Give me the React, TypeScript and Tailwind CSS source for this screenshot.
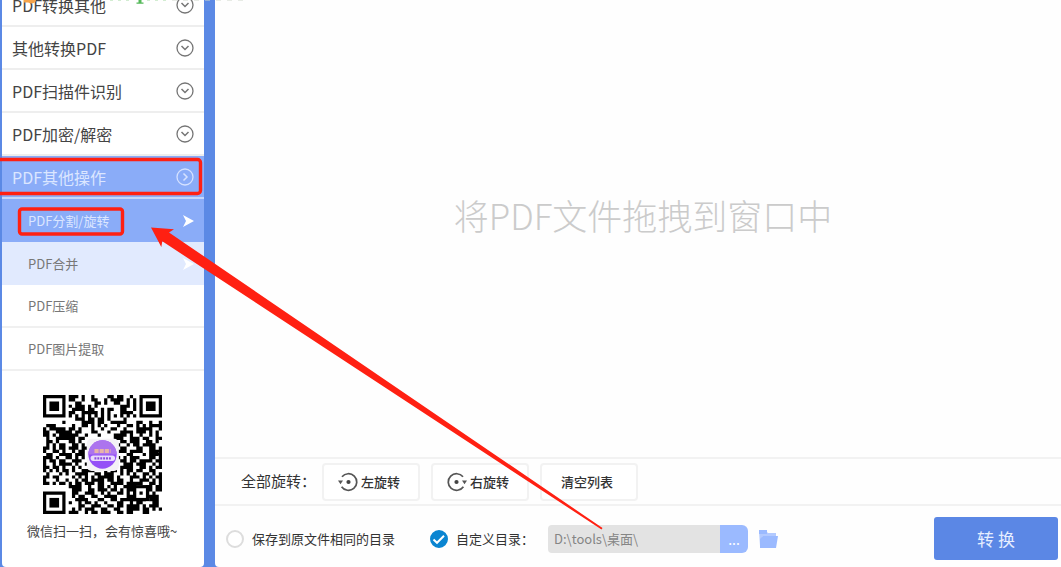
import { useState } from 'react';
import type { ReactNode } from 'react';

const GROUPS = ['PDF转换其他', '其他转换PDF', 'PDF扫描件识别', 'PDF加密/解密', 'PDF其他操作'];
const TOOLS = ['PDF分割/旋转', 'PDF合并', 'PDF压缩', 'PDF图片提取'];

// One string per module row. Bottom-left finder is drawn separately.
const QR_ROWS = [
  '#######.###.#..#....##.##..#..#######',
  '#.....#.##..#..##..#.####.#.#.#.....#',
  '#.###.#...##....##.#..##..#.#.#.###.#',
  '#.###.#.#.###.#.#.......###.#.#.###.#',
  '#.###.#..####.##..#.##..##..#.#.###.#',
  '#.....#.##..#####.#.#...####..#.....#',
  '#######.#.#.#.#.#.#.#.#.#.#.#.#######',
  '..........###.##.##.#....#...........',
  '......#.....####.##..#####...##..#..#',
  '.###.....#..##.#.#.#...#..##.#.#.####',
  '#.#####.##.#...#..#..##..#...#####..#',
  '##..#####.##...##...#...####.###.#.#.',
  '##.#.######..#...#....####.#..#..#.#.',
  '.#..######.##.........###..###.##..##',
  '.##.#...##.#..........#.##.###..##.#.',
  '.#.#.##..##.#.........##..#.##.####..',
  '##.#.##.###.###.......#.##...##..##.#',
  '#..##.#..#.##..........###.####..####',
  '.##..####.###.........#...##...#.####',
  '###.#..##.#.#.........##.#.###...##.#',
  '#.##.##..###..........#.##.##.####.##',
  '#..#.####.#..#.......#...###.###..#.#',
  '##.##.#..#.#..#......##.####..##.#.##',
  '#.#.#.##.#..####...#.##.#.##.##..##..',
  '.#...#.#..####..##.###..#.#.#..##.#.#',
  '##.##....#.#.#.#.#####.#...###.#.#.##',
  '#...#..#..#.##.####.##.##..#..###.#.#',
  '##.#.##.#.##.###.##..####.#####..##.#',
  '........####..#..##.#.#..####...##.##',
  '.........###..##.###.##.#.###.#.##.##',
  '.........##..###..#.#..##.#.#...#.#..',
  '.........#.##..##..####...###.#.####.',
  '..........####...##..##.########.###.',
  '........#..#.##.#..#...##..#.##...##.',
  '...........##..###..##.##.####.#.###.',
  '.........#.#.###..##..##..####.##.#.#',
  '........###..#.##.###..##.##...##....',
];

const qrPath = QR_ROWS.flatMap((row, y) =>
  [...row].map((cell, x) => (cell === '#' ? `M${x} ${y}h1v1h-1z` : '')),
).join('');

function CircleArrow({ open }: { open?: boolean }) {
  return (
    <svg
      width="18"
      height="18"
      viewBox="0 0 18 18"
      fill="none"
      stroke={open ? '#d5e1ff' : '#757575'}
      aria-hidden="true"
    >
      <circle cx="9" cy="9" r="8" strokeWidth="1.3" />
      <path d={open ? 'M7.500 5.500l3.500 3.500-3.500 3.500' : 'M5.500 7l3.500 3.500 3.500-3.500'} strokeWidth="1.5" />
    </svg>
  );
}

function RotateIcon({ right }: { right?: boolean }) {
  return (
    <svg width="20" height="20" viewBox="0 0 20 20" fill="none" stroke="#555" aria-hidden="true">
      <g transform={right ? 'matrix(-1 0 0 1 20 0)' : undefined}>
        <path d="M4 4.800A8.300 8.300 0 1 1 3.600 14.700" strokeWidth="1.700" />
        <path d="M0 8.400h5L2.500 12.200z" fill="#555" stroke="none" />
        <circle cx="10.500" cy="10" r="2.100" fill="#444" stroke="none" />
      </g>
    </svg>
  );
}

function QrCode() {
  return (
    <svg className="size-[119px]" viewBox="0 0 37 37" role="img" aria-label="微信二维码">
      <path d={qrPath} fill="#000" />
      <path d="M0 30h7v7H0zM1 31v5h5v-5z" fill="#000" fillRule="evenodd" />
      <path d="M2 32h3v3H2z" fill="#000" />
      <path d="M28 28h5v5h-5z" fill="#000" />
      <path d="M29 29h3v3h-3z" fill="#fff" />
      <path d="M30 30h1v1h-1z" fill="#000" />
      <rect x="13.6" y="13.6" width="10" height="10" rx="1.5" fill="#f4f2f6" />
      <circle cx="18.5" cy="18.5" r="4.4" fill="#9450f7" />
      <path d="M14.1 18.500a4.400 4.400 0 0 1 8.800 0z" fill="#ac74ee" />
      <path d="M16 17.400h5" stroke="#e8b4a8" strokeWidth="1.2" strokeDasharray="1.3 .3" />
      <rect x="14.8" y="18.8" width="7.6" height="1.7" rx=".8" fill="#e9dcfb" />
      <path d="M16 19.700h5.200" stroke="#8a4ce0" strokeWidth=".7" strokeDasharray=".6 .3" />
    </svg>
  );
}

function ToolButton({ children }: { children: ReactNode }) {
  return (
    <button
      type="button"
      className="flex h-[38px] w-[98px] items-center justify-center gap-[3px] rounded border-2 border-[#f2f2f2] bg-white pr-1 text-[13px] font-medium text-[#333]"
    >
      {children}
    </button>
  );
}

function Sidebar() {
  const [active, setActive] = useState(0);
  return (
    <aside className="w-[215px] shrink-0 bg-[#5b89e5] pr-[11px] pl-[2px]">
      <div className="flex h-full flex-col overflow-hidden rounded-b bg-white">
        <nav className="-mt-4">
          {GROUPS.map((name, i) => {
            const open = i === GROUPS.length - 1;
            return (
              <button
                key={name}
                type="button"
                aria-expanded={open}
                className={`flex h-[43px] w-full items-center justify-between border-b-2 px-2.5 text-[16px] ${
                  open
                    ? 'border-[#c5d7fb] bg-[#8aacf8] text-[#dbe6ff]'
                    : 'border-[#eeeeee] text-[#444]'
                }`}
              >
                <span>{name}</span>
                <CircleArrow open={open} />
              </button>
            );
          })}
          <ul>
            {TOOLS.map((name, i) => (
              <li key={name}>
                <button
                  type="button"
                  onClick={() => setActive(i)}
                  className={`flex h-[43px] w-full items-center justify-between pr-[10px] pl-[26px] text-[13px] ${
                    i === active
                      ? 'bg-[#8aacf8] text-[#dbe6ff]'
                      : i === 1
                        ? 'bg-[#e1eafe] text-[#777]'
                        : 'border-b-2 border-[#f0f0f0] text-[#777]'
                  }`}
                >
                  <span>{name}</span>
                  {i < 2 && (
                    <svg width="12" height="14" viewBox="0 0 12 14" fill="#fff" aria-hidden="true">
                      <path d="M1 1l11 6-11 6 3-6z" />
                    </svg>
                  )}
                </button>
              </li>
            ))}
          </ul>
        </nav>
        <div className="flex flex-col items-center gap-[7px] pt-6 pr-0.5 text-[13px] leading-5 text-[#444]">
          <QrCode />
          <p className="whitespace-nowrap">微信扫一扫，会有惊喜哦~</p>
        </div>
      </div>
    </aside>
  );
}

function OutputBar() {
  const [target, setTarget] = useState('custom');
  return (
    <footer className="flex h-[61px] items-center pt-1 pr-[3px] pl-[11px] text-[13px] text-[#333]">
      {[
        { value: 'same', label: '保存到原文件相同的目录' },
        { value: 'custom', label: '自定义目录：' },
      ].map(({ value, label }) => (
        <label key={value} className="mr-[35px] flex items-center gap-2 whitespace-nowrap last-of-type:mr-[14px]">
          <span className="grid size-[18px] place-items-center">
            <input
              type="radio"
              name="target"
              value={value}
              checked={target === value}
              onChange={() => setTarget(value)}
              className="col-start-1 row-start-1 size-[18px] appearance-none rounded-full border-2 border-[#dddddd] bg-white checked:border-[#0a85d1] checked:bg-[#0a85d1]"
            />
            {target === value && (
              <svg
                className="pointer-events-none z-10 col-start-1 row-start-1"
                width="18"
                height="18"
                viewBox="0 0 18 18"
                fill="none"
                aria-hidden="true"
              >
                <path d="M3.500 9.500l3.500 3.300 7-7" stroke="#fff" strokeWidth="2" />
              </svg>
            )}
          </span>
          <span>{label}</span>
        </label>
      ))}
      <input
        type="text"
        aria-label="自定义目录"
        defaultValue={'D:\\tools\\桌面\\'}
        className="h-7 w-[172px] rounded-l bg-[#e3e3e3] px-1.5 text-[13px] text-[#858585]"
      />
      <button
        type="button"
        aria-label="浏览"
        className="h-7 w-7 rounded-r-md bg-[#9bbaff] text-[14px] leading-7 text-white"
      >
        ...
      </button>
      <button type="button" aria-label="打开目录" className="ml-[11px]">
        <svg width="20" height="18" viewBox="0 0 20 18" aria-hidden="true">
          <path d="M0 1h7l2 2h8v3H4L1 16z" fill="#b3caff" />
          <path d="M0 0h8v4H0z" fill="#9bbaff" />
          <path d="M4 6h15l-2 12H1V9z" fill="#9bbaff" />
        </svg>
      </button>
      <button
        type="button"
        className="ml-auto h-[43px] w-[124px] rounded-[3px] bg-[#5b87e5] text-[17px] text-[#e6eeff]"
      >
        转 换
      </button>
    </footer>
  );
}

// Red boxes and the arrow that point out the steps, above the window.
function Callouts() {
  return (
    <svg
      className="pointer-events-none absolute top-0 left-0"
      width="640"
      height="560"
      viewBox="0 0 640 560"
      fill="none"
      aria-hidden="true"
    >
      <rect x="-4" y="159.5" width="204.5" height="34" rx="3" stroke="#ff2012" strokeWidth="3.4" />
      <rect x="19.5" y="209" width="103" height="25" rx="2.5" stroke="#ff2012" strokeWidth="3.4" />
      <path d="M151 227.500l23 1.800-5 3.200L602.500 528l-1 1.500L162.300 241.300l-1 5.600z" fill="#ff2012" />
      <path d="M24 0h12c0 2-2 3.500-5 3.500L28 2.500h-4z" fill="#f3a44c" />
      <path d="M138.500 0h3v2.500h2v1.200h-7V2.500h2z" fill="#55b95a" />
      <path d="M110 0h20M147 0h20" stroke="#a8dba6" strokeDasharray="3 5" />
      <path d="M172 0h76" stroke="#cfd8cc" strokeDasharray="5 6" />
    </svg>
  );
}

export default function App() {
  return (
    <div className="relative flex min-h-screen overflow-hidden bg-[#5b89e5] font-['Noto_Sans_CJK_SC',sans-serif]">
      <Sidebar />
      <main className="flex min-w-0 flex-1 flex-col rounded-bl bg-[#fefefe]">
        <section className="flex flex-1 items-center justify-center pb-7 pl-2.5">
          <p className="text-[35px] leading-none font-light text-[#cbcbcb]">将PDF文件拖拽到窗口中</p>
        </section>
        <div className="flex h-[49px] items-center gap-[11px] border-y-2 border-[#f2f2f2] pl-[26px]">
          <span className="w-[70px] whitespace-nowrap text-[15px] text-[#333]">全部旋转：</span>
          <ToolButton>
            <RotateIcon />
            左旋转
          </ToolButton>
          <ToolButton>
            <RotateIcon right />
            右旋转
          </ToolButton>
          <ToolButton>清空列表</ToolButton>
        </div>
        <OutputBar />
      </main>
      <Callouts />
    </div>
  );
}
